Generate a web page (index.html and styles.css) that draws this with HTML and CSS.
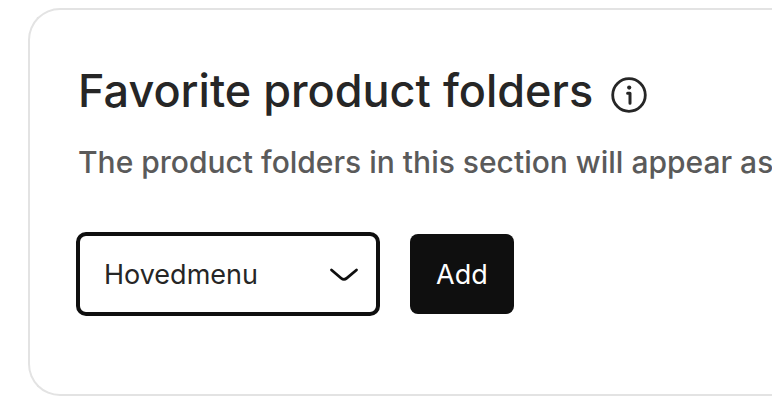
FILE: index.html
```html
<!DOCTYPE html>
<html lang="en">
<head>
<meta charset="utf-8">
<meta name="viewport" content="width=device-width, initial-scale=1">
<title>Favorite product folders</title>
<link rel="stylesheet" href="styles.css">
</head>
<body>
<main class="card">
  <header class="heading">
    <h1 class="title">Favorite product folders</h1>
    <button class="info" type="button" aria-label="More information">
      <svg viewBox="0 0 36 36" width="36" height="36" fill="none" stroke="currentColor" aria-hidden="true">
        <circle cx="18" cy="18" r="16.3" stroke-width="2.8"/>
        <path d="M16.6 16.2h2.400v10" stroke-width="3" stroke-linecap="round" stroke-linejoin="round"/>
        <circle cx="18.200" cy="10.600" r="2.1" fill="currentColor" stroke="none"/>
      </svg>
    </button>
  </header>
  <p class="description">The product folders in this section will appear as</p>
  <form class="controls">
    <div class="picker">
      <select class="select" aria-label="Product folder"><option>Hovedmenu</option></select>
      <svg class="chevron" viewBox="0 0 30 16" width="30" height="16" fill="none" stroke="currentColor" stroke-width="2.8" stroke-linecap="round" aria-hidden="true"><path d="M2.500 3l9.700 8.200q2.800 2.300 5.600 0L27.500 3"/></svg>
    </div>
    <button class="add" type="button">Add</button>
  </form>
</main>
</body>
</html>
```
FILE: styles.css
```css
* { box-sizing: border-box; }
body {
  margin: 0;
  padding: 8px 0 14px 28px;
  overflow-x: hidden;
  background: #fff;
  color: #262626;
  font-family: Inter, "Liberation Sans", sans-serif;
}
.card {
  padding: 53px 0 78px 48px;
  border: 2px solid #e3e3e3;
  border-right: 0;
  border-radius: 32px 0 0 32px;
}
.heading { display: flex; align-items: center; gap: 18px; }
.title { margin: 0; font-size: 45px; line-height: 56px; font-weight: 500; white-space: nowrap; }
.info { display: flex; margin: 8px 0 0; padding: 0; border: 0; background: none; color: #262626; }
.description {
  margin: 23px 0 0;
  color: #5a5a5a;
  font-size: 30px;
  font-weight: 500;
  line-height: 40px;
  white-space: nowrap;
}
.controls { display: flex; align-items: center; gap: 30px; margin: 50px 0 0 -2px; }
.picker { position: relative; width: 304px; }
.select {
  display: block;
  appearance: none;
  width: 100%;
  height: 84px;
  padding: 0 60px 0 24px;
  border: 4px solid #0f0f0f;
  border-radius: 10px;
  background: #fff;
  color: #262626;
  font: inherit;
  font-size: 27px;
}
.chevron { position: absolute; right: 21px; top: 35px; color: #0f0f0f; pointer-events: none; }
.add {
  height: 80px;
  padding: 0 26px;
  border: 0;
  border-radius: 8px;
  background: #0f0f0f;
  color: #fff;
  font: inherit;
  font-size: 27px;
}
```
